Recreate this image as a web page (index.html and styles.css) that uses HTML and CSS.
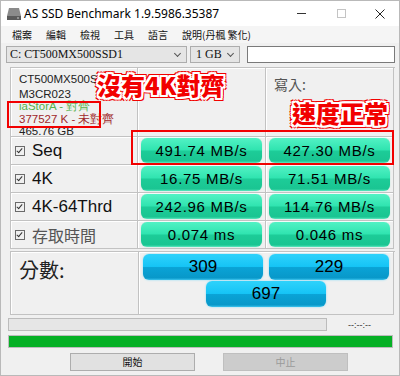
FILE: index.html
```html
<!DOCTYPE html>
<html lang="zh-Hant">
<head>
  <meta charset="UTF-8">
  <title>AS SSD Benchmark</title>
  <link rel="stylesheet" href="styles.css">
</head>
<body>
  <div class="window">
    <div class="titlebar">
      <svg class="app-icon" width="16" height="14" viewBox="0 0 16 14">
        <path d="M3 1 H13 L15 9 H1 Z" fill="#8a8a8a"/>
        <rect x="1" y="9" width="14" height="4" fill="#5a5a5a"/>
        <rect x="11" y="10.5" width="2" height="1" fill="#c8c8c8"/>
      </svg>
      <span class="title">AS SSD Benchmark 1.9.5986.35387</span>
      <div class="controls">
        <span class="ctl-min"></span>
        <span class="ctl-max"></span>
        <svg class="ctl-close" width="10" height="10" viewBox="0 0 10 10">
          <path d="M0.5 0.5 L9.5 9.5 M9.5 0.5 L0.5 9.5" stroke="#222" stroke-width="1"/>
        </svg>
      </div>
    </div>

    <div class="menubar">
      <span>檔案</span>
      <span>編輯</span>
      <span>檢視</span>
      <span>工具</span>
      <span>語言</span>
      <span>說明(丹楓 繁化)</span>
    </div>

    <div class="toolbar">
      <div class="combo drive">C: CT500MX500SSD1<span class="chev"></span></div>
      <div class="combo size">1 GB<span class="chev"></span></div>
      <div class="textbox"></div>
    </div>

    <div class="results">
      <div class="cell info">
        <div class="l1">CT500MX500SSD1</div>
        <div>M3CR023</div>
        <div class="ok">iaStorA - 對齊</div>
        <div class="bad">377527 K - 未對齊</div>
        <div>465.76 GB</div>
      </div>
      <div class="cell head">讀取:</div>
      <div class="cell head">寫入:</div>

      <div class="cell label"><span class="check"></span>Seq</div>
      <div class="cell val"><div class="btn green">491.74 MB/s</div></div>
      <div class="cell val"><div class="btn green">427.30 MB/s</div></div>

      <div class="cell label"><span class="check"></span>4K</div>
      <div class="cell val"><div class="btn green">16.75 MB/s</div></div>
      <div class="cell val"><div class="btn green">71.51 MB/s</div></div>

      <div class="cell label"><span class="check"></span>4K-64Thrd</div>
      <div class="cell val"><div class="btn green">242.96 MB/s</div></div>
      <div class="cell val"><div class="btn green">114.76 MB/s</div></div>

      <div class="cell label cjk"><span class="check"></span>存取時間</div>
      <div class="cell val"><div class="btn green">0.074 ms</div></div>
      <div class="cell val"><div class="btn green">0.046 ms</div></div>
    </div>

    <div class="score">
      <div class="cell score-label">分數:</div>
      <div class="cell score-vals">
        <div class="btn blue">309</div>
        <div class="btn blue">229</div>
        <div class="btn blue total">697</div>
      </div>
    </div>

    <div class="progress-row">
      <div class="progress"></div>
      <span class="time">--:--:--</span>
    </div>
    <div class="greenbar"></div>

    <div class="actions">
      <div class="action">開始</div>
      <div class="action disabled">中止</div>
    </div>

    <div class="note note-4k">沒有4K對齊</div>
    <div class="note note-speed">速度正常</div>
    <div class="mark mark-align"></div>
    <div class="mark mark-seq"></div>
  </div>
</body>
</html>
```

FILE: styles.css
```css
body {
  margin: 0;
  background-color: #f0f0f0;
  font-family: "Liberation Sans", Arial, sans-serif;
}

.window {
  position: relative;
  width: 400px;
  height: 376px;
  box-sizing: border-box;
  border: 1px solid #b9b9b9;
  background-color: #f0f0f0;
  overflow: hidden;
}

.titlebar {
  display: flex;
  align-items: center;
  height: 25px;
  background-color: #ffffff;
  padding-left: 5px;
}

.app-icon {
  margin-right: 2px;
}

.title {
  font-family: "Noto Sans", sans-serif;
  font-size: 12px;
  color: #000;
}

.controls {
  margin-left: auto;
  display: flex;
  align-items: center;
}

.ctl-min {
  width: 9px;
  height: 1px;
  background-color: #333;
  margin-right: 31px;
}

.ctl-max {
  width: 7px;
  height: 7px;
  border: 1px solid #c4c4c4;
  margin-right: 29px;
}

.ctl-close {
  margin-right: 14px;
}

.menubar {
  display: flex;
  height: 17px;
  align-items: center;
  padding-left: 11px;
  gap: 14px;
  background-color: #f5f5f5;
  font-family: "Noto Sans CJK TC", sans-serif;
  font-size: 10px;
  color: #111;
}

.toolbar {
  display: flex;
  height: 17px;
  margin: 3px 0 0 5px;
}

.combo {
  position: relative;
  box-sizing: border-box;
  height: 17px;
  border: 1px solid #adadad;
  background-color: #e5e5e5;
  font-family: "Liberation Serif", serif;
  font-size: 12px;
  line-height: 15px;
  padding-left: 3px;
  color: #111;
}

.combo.drive {
  width: 181px;
}

.combo.size {
  width: 50px;
  margin-left: 3px;
  padding-left: 5px;
}

.chev {
  position: absolute;
  right: 6px;
  top: 4px;
  width: 4px;
  height: 4px;
  border-right: 1px solid #555;
  border-bottom: 1px solid #555;
  transform: rotate(45deg);
}

.textbox {
  box-sizing: border-box;
  width: 148px;
  height: 17px;
  margin-left: 7px;
  border: 1px solid #7a7a7a;
  background-color: #fff;
}

.results {
  display: grid;
  grid-template-columns: 127px 128px 128px;
  grid-template-rows: 69px repeat(4, 28px);
  margin: 4px 0 0 9px;
  width: 384px;
  border-top: 1px solid #c2c2c2;
  border-left: 1px solid #c2c2c2;
}

.cell {
  box-sizing: border-box;
  border-right: 1px solid #c2c2c2;
  border-bottom: 1px solid #c2c2c2;
  box-shadow: inset 1px 1px 0 #ffffff;
}

.info {
  padding: 5px 0 0 8px;
  font-size: 11.5px;
  line-height: 12.5px;
  color: #222;
  overflow: hidden;
}

.info .l1 {
  margin-bottom: 2px;
}

.info .ok {
  color: #56b04a;
}

.info .bad {
  color: #a0282a;
}

.head {
  padding: 6px 0 0 8px;
  font-family: "Noto Sans CJK TC", sans-serif;
  font-size: 14px;
  color: #555;
}

.label {
  display: flex;
  align-items: center;
  padding-left: 4px;
  font-size: 17px;
  color: #111;
}

.label.cjk {
  font-family: "Noto Sans CJK TC", sans-serif;
  font-size: 16px;
  color: #555;
}

.check {
  position: relative;
  box-sizing: border-box;
  width: 10px;
  height: 10px;
  border: 1px solid #6a6a6a;
  margin-right: 7px;
  flex-shrink: 0;
}

.check::after {
  content: "";
  position: absolute;
  left: 2px;
  top: 0px;
  width: 2px;
  height: 5px;
  border-right: 1px solid #333;
  border-bottom: 1px solid #333;
  transform: rotate(40deg);
}

.val {
  padding: 1px 3px 1px 3px;
}

.btn {
  display: flex;
  align-items: center;
  justify-content: center;
  height: 100%;
  border-radius: 6px;
  color: #000;
  box-sizing: border-box;
}

.green {
  font-size: 15px;
  letter-spacing: 0.7px;
  background: linear-gradient(#52f2c4 0%, #30e4b0 48%, #1dcc98 52%, #1ac592 92%, #5ee8c0 100%);
  box-shadow: 0 0 1px #7ad9bd;
}

.score {
  display: grid;
  grid-template-columns: 128px 255px;
  height: 63px;
  margin: 2px 0 0 9px;
  width: 384px;
  border-top: 1px solid #c2c2c2;
  border-left: 1px solid #c2c2c2;
}

.score-label {
  padding: 3px 0 0 8px;
  font-family: "Noto Sans CJK TC", sans-serif;
  font-size: 20px;
  color: #222;
}

.score-vals {
  display: grid;
  grid-template-columns: 120px 120px;
  grid-template-rows: 26px 26px;
  column-gap: 6px;
  row-gap: 1px;
  padding: 2px 0 0 4px;
}

.blue {
  font-size: 17px;
  background: linear-gradient(#2ed2fb 0%, #16c4f6 48%, #0aa3d6 52%, #0898c9 92%, #3cc4ee 100%);
  box-shadow: 0 0 2px #7fd8f5;
}

.blue.total {
  grid-column: 1 / 3;
  width: 120px;
  justify-self: center;
}

.progress-row {
  display: flex;
  align-items: center;
  margin: 3px 0 0 7px;
  height: 13px;
}

.progress {
  box-sizing: border-box;
  width: 319px;
  height: 13px;
  border: 1px solid #bcbcbc;
  background-color: #e6e6e6;
}

.time {
  margin-left: 21px;
  font-size: 9px;
  color: #333;
}

.greenbar {
  box-sizing: border-box;
  height: 13px;
  margin: 4px 6px 0 7px;
  border: 1px solid #bcbcbc;
  background-color: #06b025;
}

.actions {
  display: flex;
  margin: 5px 0 0 69px;
  gap: 28px;
}

.action {
  box-sizing: border-box;
  width: 125px;
  height: 18px;
  border: 1px solid #adadad;
  background-color: #e1e1e1;
  font-family: "Noto Sans CJK TC", sans-serif;
  font-size: 10px;
  line-height: 16px;
  text-align: center;
  color: #111;
}

.action.disabled {
  border-color: #bfbfbf;
  background-color: #cccccc;
  color: #9a9a9a;
}

.note {
  position: absolute;
  font-family: "Noto Sans CJK TC", sans-serif;
  font-weight: 900;
  font-size: 24px;
  line-height: 24px;
  color: #f20000;
  text-shadow:
    2px 0 0 #fff, -2px 0 0 #fff, 0 2px 0 #fff, 0 -2px 0 #fff,
    2px 2px 0 #fff, -2px -2px 0 #fff, 2px -2px 0 #fff, -2px 2px 0 #fff,
    3px 0 0 #f20000, -3px 0 0 #f20000, 0 3px 0 #f20000, 0 -3px 0 #f20000,
    3px 3px 0 #f20000, -3px -3px 0 #f20000, 3px -3px 0 #f20000, -3px 3px 0 #f20000;
}

.note-4k {
  left: 96px;
  top: 72px;
}

.note-speed {
  left: 291px;
  top: 100px;
}

.mark {
  position: absolute;
  border: 2px solid #f20000;
  box-sizing: border-box;
}

.mark-align {
  left: 6px;
  top: 100px;
  width: 94px;
  height: 27px;
}

.mark-seq {
  left: 130px;
  top: 129px;
  width: 263px;
  height: 35px;
}
```
